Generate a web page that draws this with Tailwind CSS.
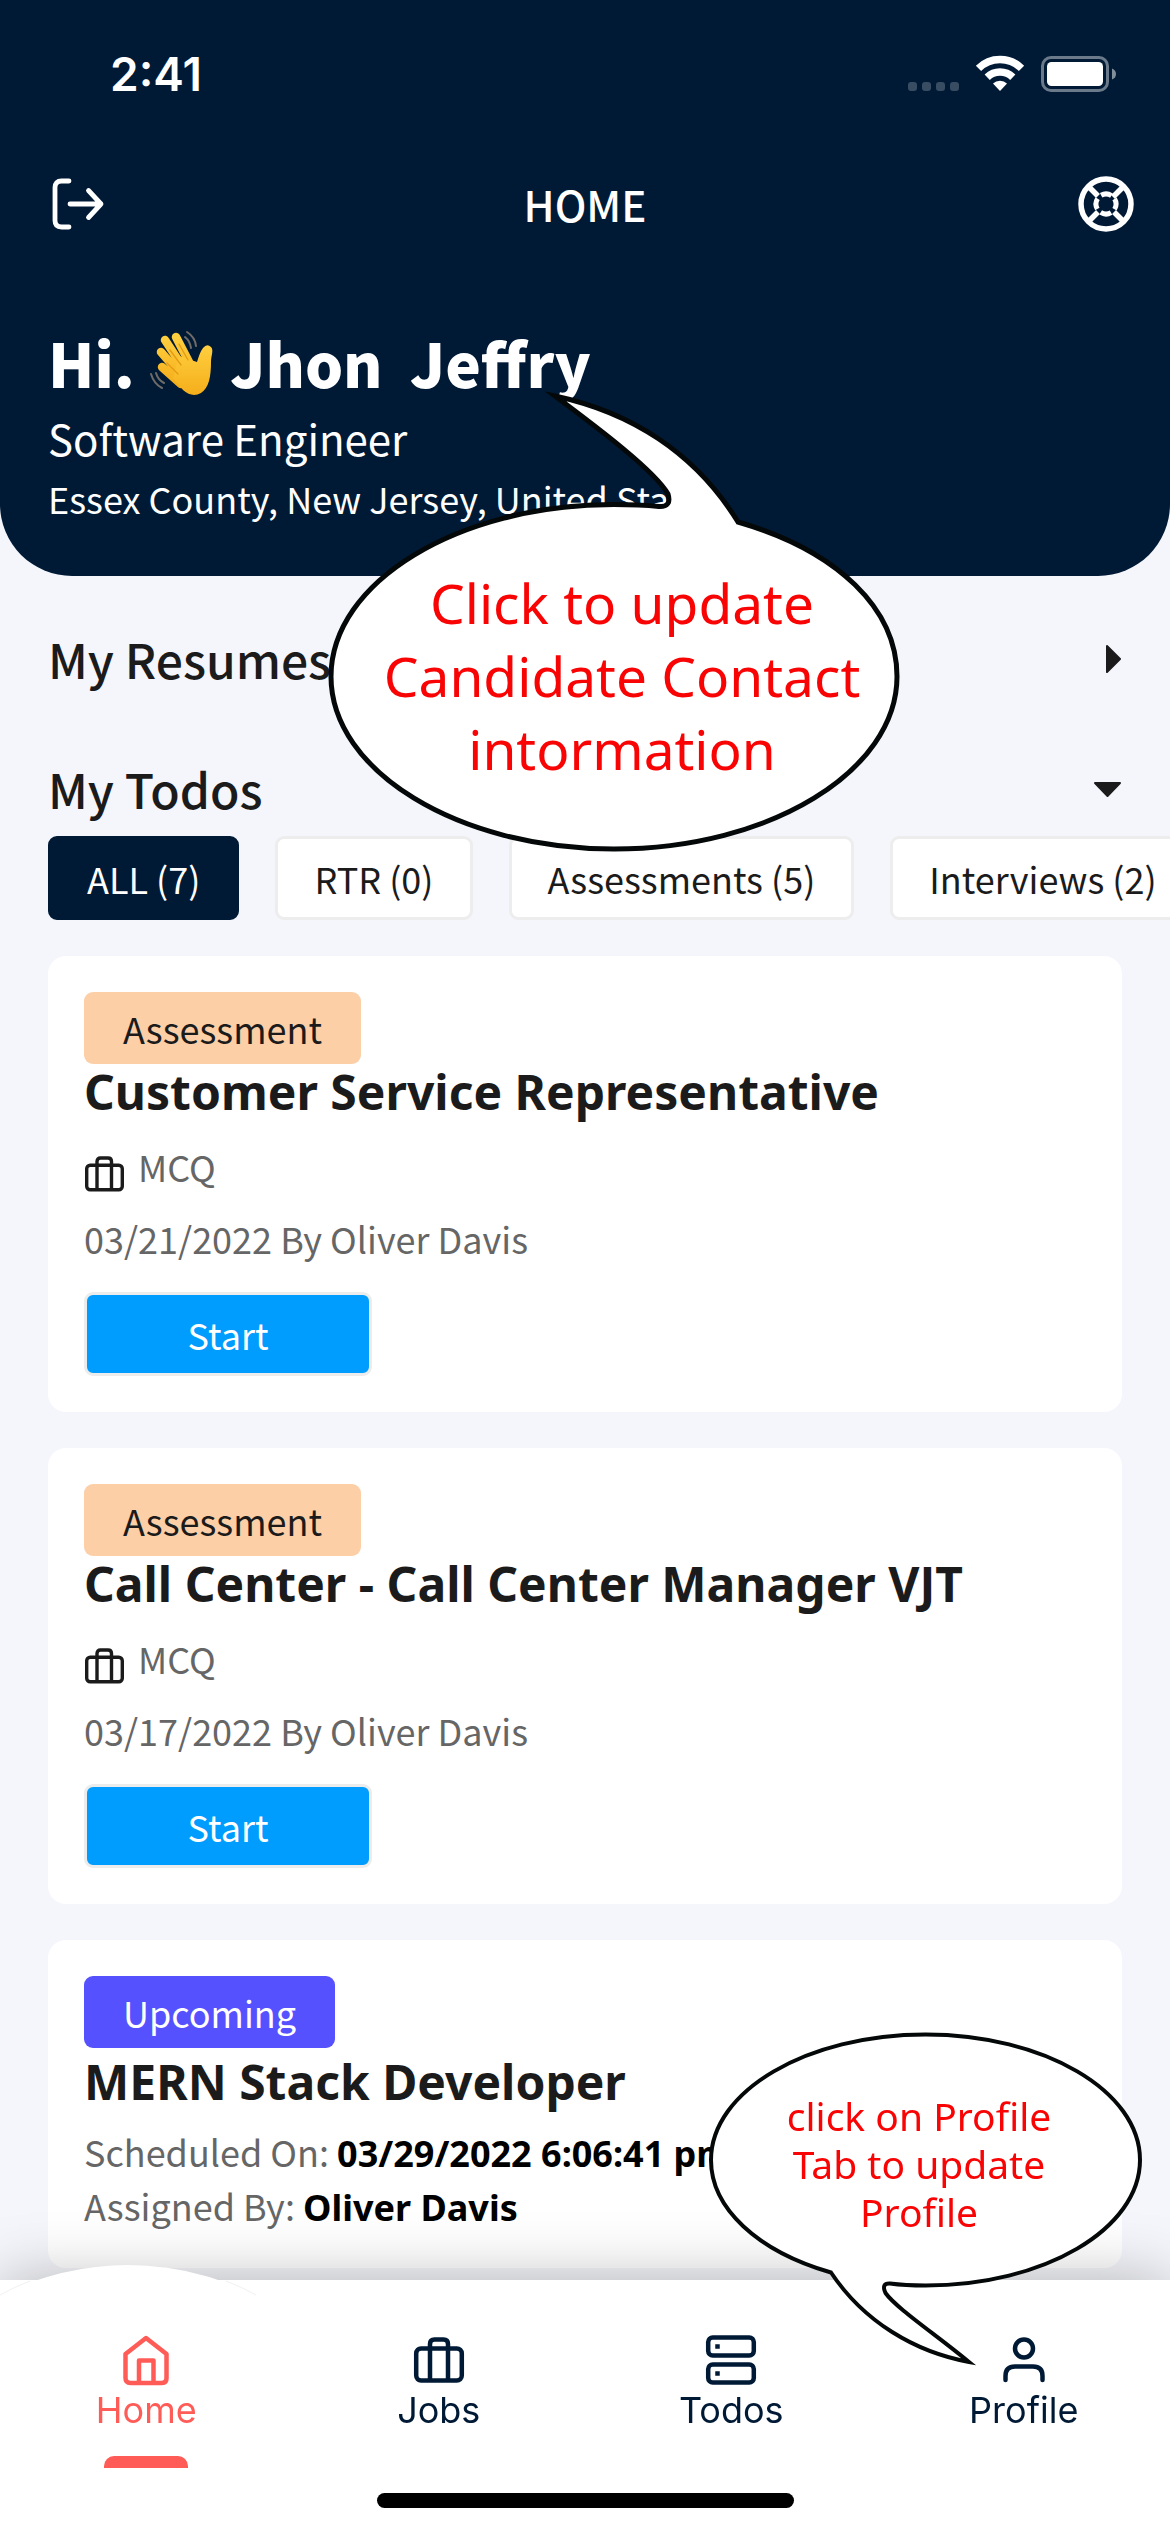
<!DOCTYPE html>
<html lang="en">
<head>
<meta charset="utf-8">
<meta name="viewport" content="width=device-width, initial-scale=1">
<title>Home</title>
<script src="https://cdn.jsdelivr.net/npm/@tailwindcss/browser@4"></script>
</head>
<body class="relative min-h-screen overflow-x-hidden bg-[#f5f6fb] font-['Noto_Sans_CJK_SC',sans-serif] text-[#1b1b1b]">

<svg class="hidden" aria-hidden="true">
  <symbol id="bag" viewBox="0 0 40 40">
    <g fill="none" stroke="currentColor" stroke-width="3.4" stroke-linejoin="round">
      <rect x="2.7" y="9.2" width="35.6" height="24.6" rx="3.5"/>
      <path d="M13 33.800V5.500Q13 2 16.500 2H24Q27.500 2 27.500 5.500V33.800"/>
    </g>
  </symbol>
</svg>

<header class="rounded-b-[72px] bg-[#001a36] px-12 pb-12 text-white">
  <div class="flex h-[104px] items-start justify-between pt-11 pr-1.5 pl-[62px]">
    <span class="font-['Inter',sans-serif] text-[46px] leading-[60px] font-semibold">2:41</span>
    <svg class="mt-2.5" width="209" height="38" viewBox="0 0 209 38" aria-hidden="true">
      <g fill="#fff" fill-opacity=".22">
        <rect x="1" y="28" width="9" height="9" rx="3"/><rect x="15" y="28" width="9" height="9" rx="3"/><rect x="29" y="28" width="9" height="9" rx="3"/><rect x="43" y="28" width="9" height="9" rx="3"/>
      </g>
      <g fill="none" stroke="#fff" stroke-width="7.500">
        <path d="M71.500 14.300A30.500 30.500 0 0 1 114.500 14.300"/>
        <path d="M80.200 23.200A18.500 18.500 0 0 1 105.800 23.200"/>
      </g>
      <path d="M93 37L86 29.500A10 10 0 0 1 100 29.500Z" fill="#fff"/>
      <rect x="135.500" y="3.500" width="65" height="33" rx="8.500" fill="none" stroke="#fff" stroke-opacity=".42" stroke-width="3"/>
      <rect x="140" y="8" width="56" height="24" rx="4.500" fill="#fff"/>
      <path d="M205 14.500Q209 16 209 20T205 25.500Z" fill="#fff" fill-opacity=".5"/>
    </svg>
  </div>

  <div class="grid h-[200px] grid-cols-[60px_1fr_60px] items-center">
    <button type="button" aria-label="Log out">
      <svg width="60" height="60" viewBox="0 0 60 60" fill="none" stroke="#fff" stroke-width="4.800" stroke-linecap="round" stroke-linejoin="round">
        <path d="M21 7H13.500Q7 7 7 13.500V46.500Q7 53 13.500 53H21M22 30H53M40.500 16.500L53 30L40.500 43.500"/>
      </svg>
    </button>
    <h1 class="text-center text-[42px] leading-[60px] font-medium">HOME</h1>
    <button type="button" aria-label="Help" class="justify-self-end -mr-3.5">
      <svg width="60" height="60" viewBox="0 0 60 60" fill="none" stroke="#fff">
        <circle cx="30" cy="30" r="25" stroke-width="5.500"/>
        <circle cx="30" cy="30" r="10" stroke-width="5" stroke-dasharray="10.700 5" stroke-dashoffset="-2.500" transform="rotate(-45 30 30)"/>
        <path d="M13 13L22 22M47 13L37 23M13 47L22 38M47 47L38 38" stroke-width="5.500"/>
      </svg>
    </button>
  </div>

  <div class="pt-4">
    <h2 class="flex items-center text-[60px] leading-[84px] font-black whitespace-pre"><span>Hi. </span><svg class="mt-1" role="img" aria-label="waving hand" width="68" height="68" viewBox="0 0 68 68">
      <defs><linearGradient id="skin" x1="0" y1="0" x2="0" y2="1"><stop offset="0" stop-color="#ffcf3f"/><stop offset="1" stop-color="#f5ae1b"/></linearGradient></defs>
      <g fill="none" stroke="url(#skin)" stroke-width="8.500" stroke-linecap="round">
        <path d="M16 10L33 36M27 7L40 32M12 22L31 44M13 37L32 54"/>
      </g>
      <path d="M30 26L48 32C50 26 51 22 54 18Q58 13 62 17C65 20 62 26 62 32C62 46 60 58 52 63Q43 68 34 60L24 48Z" fill="url(#skin)"/>
      <path d="M21 20L32 35M30 14L39 30M18 33L29 44" fill="none" stroke="#e59a12" stroke-width="1.300" stroke-linecap="round"/>
      <path d="M38 2Q46 7 47 16M36 7Q41 11 42 18M2 44Q5 54 13 58M7 43Q9 50 15 53" fill="none" stroke="#6f6b66" stroke-width="2" stroke-linecap="round"/>
    </svg><span> Jhon  Jeffry</span></h2>
    <p class="mt-1 text-[42px] leading-[60px]">Software Engineer</p>
    <p class="text-[36px] leading-[60px]">Essex County, New Jersey, United States</p>
  </div>
</header>

<main class="px-12 pb-60">
  <button type="button" class="mt-[46px] flex w-full items-center justify-between text-left text-[48px] leading-[72px] font-medium">
    My Resumes
    <svg width="30" height="30" viewBox="0 0 30 30" aria-hidden="true"><path d="M15 3L28 16L15 29Z" fill="#1b1b1b" stroke="#1b1b1b" stroke-width="2" stroke-linejoin="round"/></svg>
  </button>
  <button type="button" class="mt-[58px] flex w-full items-center justify-between text-left text-[48px] leading-[72px] font-medium">
    My Todos
    <svg width="30" height="30" viewBox="0 0 30 30" aria-hidden="true"><path d="M3 10H28L15.500 23Z" fill="#1b1b1b" stroke="#1b1b1b" stroke-width="2" stroke-linejoin="round"/></svg>
  </button>

  <div class="-mr-12 mt-3 flex gap-9 overflow-hidden text-[36px] leading-[78px] whitespace-nowrap">
    <button type="button" class="shrink-0 rounded-[9px] border-3 border-[#001a36] bg-[#001a36] px-9 text-white">ALL (7)</button>
    <button type="button" class="shrink-0 rounded-[9px] border-3 border-[#ededed] bg-white px-9">RTR (0)</button>
    <button type="button" class="shrink-0 rounded-[9px] border-3 border-[#ededed] bg-white px-9">Assessments (5)</button>
    <button type="button" class="shrink-0 rounded-[9px] border-3 border-[#ededed] bg-white px-9">Interviews (2)</button>
  </div>

  <div class="mt-9 flex flex-col gap-9">
    <article class="flex flex-col items-start rounded-[18px] bg-white p-9 text-[36px] leading-[60px] text-[#666]">
      <span class="rounded-[9px] bg-[#fccfa7] px-[39px] leading-[72px] text-[#1b1b1b]">Assessment</span>
      <h3 class="font-['Noto_Sans',sans-serif] text-[48px] leading-[56px] font-bold text-[#1b1b1b]">Customer Service Representative</h3>
      <p class="mt-4 flex items-end gap-3.5"><svg class="size-10 text-[#1b1b1b]" aria-hidden="true"><use href="#bag"/></svg>MCQ</p>
      <p class="mt-3">03/21/2022 By Oliver Davis</p>
      <button type="button" class="mt-6 w-72 rounded-[9px] border-3 border-[#ececec] bg-[#009dff] leading-[78px] text-white">Start</button>
    </article>

    <article class="flex flex-col items-start rounded-[18px] bg-white p-9 text-[36px] leading-[60px] text-[#666]">
      <span class="rounded-[9px] bg-[#fccfa7] px-[39px] leading-[72px] text-[#1b1b1b]">Assessment</span>
      <h3 class="font-['Noto_Sans',sans-serif] text-[48px] leading-[56px] font-bold text-[#1b1b1b]">Call Center - Call Center Manager VJT</h3>
      <p class="mt-4 flex items-end gap-3.5"><svg class="size-10 text-[#1b1b1b]" aria-hidden="true"><use href="#bag"/></svg>MCQ</p>
      <p class="mt-3">03/17/2022 By Oliver Davis</p>
      <button type="button" class="mt-6 w-72 rounded-[9px] border-3 border-[#ececec] bg-[#009dff] leading-[78px] text-white">Start</button>
    </article>

    <article class="flex flex-col items-start rounded-[18px] bg-white p-9 text-[36px] leading-[54px] text-[#666]">
      <span class="rounded-[9px] bg-[#5551ff] px-[39px] leading-[72px] text-white">Upcoming</span>
      <h3 class="mt-1.5 font-['Noto_Sans',sans-serif] text-[48px] leading-[56px] font-bold text-[#1b1b1b]">MERN Stack Developer</h3>
      <p class="mt-3.5">Scheduled On: <b class="font-['Noto_Sans',sans-serif] leading-none font-bold text-black">03/29/2022 6:06:41 pm</b></p>
      <p>Assigned By: <b class="font-['Noto_Sans',sans-serif] leading-none font-bold text-black">Oliver Davis</b></p>
    </article>
  </div>
</main>

<nav class="fixed inset-x-0 bottom-0 h-[252px] bg-white font-['Inter',sans-serif] text-[36px] leading-12 text-[#001a36] shadow-[0_0_60px_rgba(0,0,0,0.28)]">
  <svg class="absolute -top-4 left-0" width="260" height="36" viewBox="0 0 260 36" aria-hidden="true"><path d="M0 31Q64 1 128 1T256 31V36H0Z" fill="#fff"/><path d="M0 31Q14 23 30 17M226 17Q242 23 256 31" fill="none" stroke="#f1f1f3"/></svg>
  <div class="relative grid grid-cols-4 pt-[54px]">
    <a href="#home" class="flex flex-col items-center text-[#ff5c58]">
      <svg width="52" height="52" viewBox="0 0 52 52" fill="none" stroke="currentColor" stroke-width="4.500" stroke-linejoin="round" stroke-linecap="round" aria-hidden="true"><path d="M5.500 20L26 4L46.500 20V44Q46.500 49 41.500 49H10.500Q5.500 49 5.500 44ZM19 49V26.500H33.500V49"/></svg>
      Home
      <span class="mt-[22px] h-3 w-21 rounded-t-[10px] bg-[#ff5c58]"></span>
    </a>
    <a href="#jobs" class="flex flex-col items-center">
      <svg width="52" height="52" viewBox="0 0 52 52" fill="none" stroke="currentColor" stroke-width="4.500" stroke-linejoin="round" aria-hidden="true"><rect x="3.200" y="14.500" width="45.600" height="32" rx="5"/><path d="M17 46.500V10Q17 5.500 21.500 5.500H30.500Q35 5.500 35 10V46.500"/></svg>
      Jobs
    </a>
    <a href="#todos" class="flex flex-col items-center">
      <svg width="52" height="52" viewBox="0 0 52 52" fill="none" stroke="currentColor" stroke-width="4.500" aria-hidden="true"><rect x="3.200" y="3.500" width="45.600" height="18" rx="4.500"/><rect x="3.200" y="30.500" width="45.600" height="18" rx="4.500"/><path d="M12.500 10.300V14.700M12.500 37.300V41.700"/></svg>
      Todos
    </a>
    <a href="#profile" class="flex flex-col items-center">
      <svg width="52" height="52" viewBox="0 0 52 52" fill="none" stroke="currentColor" stroke-width="4.500" stroke-linecap="round" aria-hidden="true"><circle cx="26" cy="14.500" r="9"/><path d="M7.500 46V42Q7.500 32.500 17 32.500H35Q44.500 32.500 44.500 42V46"/></svg>
      Profile
    </a>
  </div>
  <div class="mx-auto mt-[25px] h-[15px] w-[417px] rounded-full bg-black"></div>
</nav>

<!-- Speech bubble over the contact details -->
<div class="absolute top-[388px] left-[326px] w-[576px]">
  <svg width="576" height="466" viewBox="326 388 576 466" fill="#fff" stroke="#050808" stroke-width="5" stroke-linejoin="miter" stroke-miterlimit="8" aria-hidden="true">
    <path d="M738 522C838 551 897 609 897 676.500C897 771 770 849 614 849S331 771 331 676.500S458 504.500 614 504.500Q640 504.500 659 506.500Q672 507 668 494C655 471 598 428 555 396C630 412 695 452 738 522Z"/>
  </svg>
  <p class="absolute inset-x-0 top-[178px] pl-4 text-center font-['Comic_Sans_MS','Noto_Sans',cursive] text-[55px] leading-[73px] text-[#f80404]">Click to update<br>Candidate Contact<br>intormation</p>
</div>

<!-- Speech bubble over the Profile tab -->
<div class="fixed bottom-[162px] left-[706px] w-[438px]">
  <svg width="438" height="340" viewBox="706 2030 438 340" fill="#fff" stroke="#050808" stroke-width="4" stroke-linejoin="miter" stroke-miterlimit="8" aria-hidden="true">
    <path d="M831 2272.500C757 2251 711 2208 711 2160C711 2091 807 2034.500 925.500 2034.500S1140 2091 1140 2160S1044 2285.500 925.500 2285.500Q905 2285.500 890 2283.500Q881 2283 885.500 2293C896 2308 938 2336 969 2362C915 2352 864 2322 831 2272.500Z"/>
  </svg>
  <p class="absolute inset-x-0 top-[62px] pr-3 text-center font-['Comic_Sans_MS','Noto_Sans',cursive] text-[39px] leading-12 text-[#f80404]">click on Profile<br>Tab to update<br>Profile</p>
</div>
</body>
</html>
